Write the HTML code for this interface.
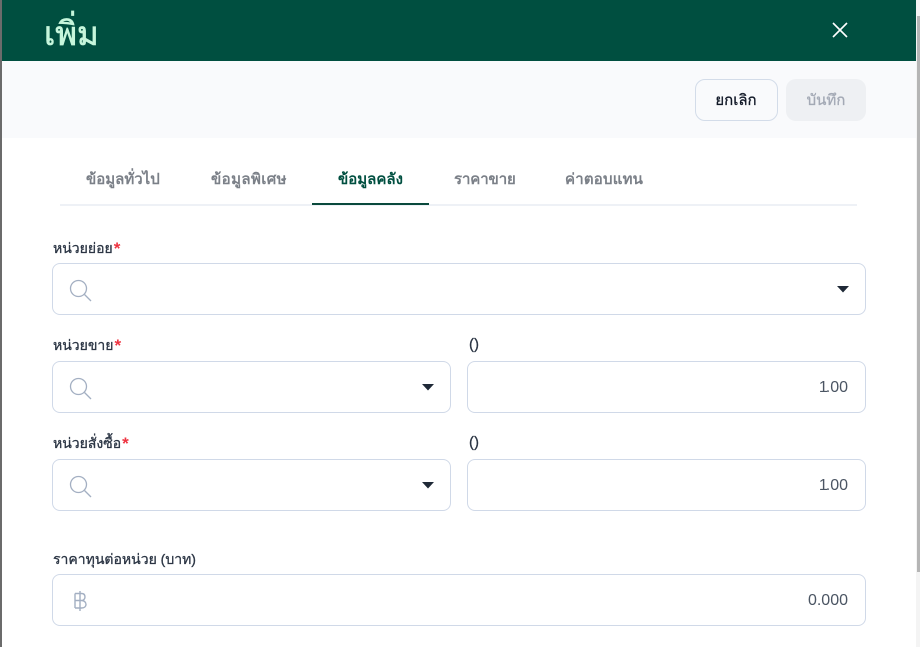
<!DOCTYPE html>
<html><head><meta charset="utf-8"><style>
html,body{margin:0;padding:0;background:#fff;width:920px;height:647px;overflow:hidden}
body{position:relative;font-family:"Liberation Sans","Noto Sans CJK SC",sans-serif}
div,span{position:absolute;box-sizing:border-box;white-space:nowrap}
svg{position:absolute}
.lbl{font-size:14px;font-weight:500;color:#2b3544;line-height:20px;-webkit-text-stroke:.3px #2b3544}
.lbl i{color:#ee3340;font-style:normal;position:static;font-size:17px;line-height:14px;font-weight:700;-webkit-text-stroke:0;margin-left:1px;vertical-align:-1px}
.tab{top:169px;font-size:15px;font-weight:700;color:#7b8088;line-height:22px}
.box{background:#fff;border:1px solid #d0d9e8;border-radius:8px;height:52px}
.val{font-size:16px;color:#4b5563;line-height:20px;text-align:right}
.val b{font-weight:400;position:static;letter-spacing:-2px}
</style></head><body>
<div style="left:0;top:0;width:916px;height:61px;background:#004f40"></div>
<div style="left:0;top:61px;width:916px;height:77px;background:#f9fafc"></div>
<div style="left:0;top:0;width:2px;height:647px;background:#6b6b6b"></div>
<div style="left:916px;top:0;width:4px;height:647px;background:#f4f4f4"></div>
<div style="left:917px;top:16px;width:3px;height:556px;background:#b5b5b5"></div>
<div style="left:44px;top:12px;font-size:33px;line-height:44px;font-weight:500;color:#c6f6dc;-webkit-text-stroke:.7px #c6f6dc">เพิ่ม</div>
<svg style="left:832px;top:22px" width="16" height="16" viewBox="0 0 16 16"><path d="M1 1L15 15M15 1L1 15" stroke="#fff" stroke-width="1.6" fill="none"/></svg>
<div style="left:694.500px;top:79px;width:83px;height:42px;border:1px solid #d3dce9;border-radius:10px;background:#f9fafc;font-size:15px;font-weight:500;color:#111827;text-align:center;line-height:41px;-webkit-text-stroke:.3px #111827">ยกเลิก</div>
<div style="left:786px;top:79px;width:80px;height:42px;border-radius:10px;background:#eef0f3;font-size:15px;font-weight:500;color:#a3a9b5;text-align:center;line-height:43px;-webkit-text-stroke:.3px #a3a9b5">บันทึก</div>

<div style="left:60px;top:204px;width:797px;height:2px;background:#eef1f6"></div>
<div style="left:312px;top:203px;width:117px;height:2px;background:#0a4a3c"></div>
<div class="tab" style="left:86px">ข้อมูลทั่วไป</div>
<div class="tab" style="left:211px;letter-spacing:.4px">ข้อมูลพิเศษ</div>
<div class="tab" style="left:338px;color:#004f40">ข้อมูลคลัง</div>
<div class="tab" style="left:454px;letter-spacing:-.1px">ราคาขาย</div>
<div class="tab" style="left:565px;letter-spacing:.2px">ค่าตอบแทน</div>

<div class="lbl" style="left:53px;top:238px">หน่วยย่อย<i>*</i></div>
<div class="box" style="left:52px;top:263px;width:814px"></div>
<svg style="left:69px;top:279px" width="23" height="23" viewBox="0 0 23 23"><circle cx="9.5" cy="9.5" r="8" fill="none" stroke="#a3afc2" stroke-width="1.3"/><path d="M15.500 15.500L22 22" stroke="#a3afc2" stroke-width="1.3" fill="none"/></svg>
<svg style="left:837px;top:286px" width="12" height="7" viewBox="0 0 12 7"><path d="M0 0H12L6 6.500Z" fill="#1f2937"/></svg>

<div class="lbl" style="left:53px;top:335px">หน่วยขาย<i>*</i></div>
<div class="box" style="left:52px;top:361px;width:399px"></div>
<svg style="left:69px;top:377px" width="23" height="23" viewBox="0 0 23 23"><circle cx="9.5" cy="9.5" r="8" fill="none" stroke="#a3afc2" stroke-width="1.3"/><path d="M15.500 15.500L22 22" stroke="#a3afc2" stroke-width="1.3" fill="none"/></svg>
<svg style="left:422px;top:384px" width="12" height="7" viewBox="0 0 12 7"><path d="M0 0H12L6 6.500Z" fill="#1f2937"/></svg>
<div class="lbl" style="left:469px;top:335px;font-size:15px">()</div>
<div class="box" style="left:467px;top:361px;width:399px"></div>
<div class="val" style="left:748px;top:378px;width:100px"><b>1</b>.00</div>

<div class="lbl" style="left:53px;top:433px">หน่วยสั่งซื้อ<i>*</i></div>
<div class="box" style="left:52px;top:459px;width:399px"></div>
<svg style="left:69px;top:475px" width="23" height="23" viewBox="0 0 23 23"><circle cx="9.5" cy="9.5" r="8" fill="none" stroke="#a3afc2" stroke-width="1.3"/><path d="M15.500 15.500L22 22" stroke="#a3afc2" stroke-width="1.3" fill="none"/></svg>
<svg style="left:422px;top:482px" width="12" height="7" viewBox="0 0 12 7"><path d="M0 0H12L6 6.500Z" fill="#1f2937"/></svg>
<div class="lbl" style="left:469px;top:433px;font-size:15px">()</div>
<div class="box" style="left:467px;top:459px;width:399px"></div>
<div class="val" style="left:748px;top:476px;width:100px"><b>1</b>.00</div>

<div class="lbl" style="left:53px;top:549px">ราคาทุนต่อหน่วย (บาท)</div>
<div class="box" style="left:52px;top:574px;width:814px"></div>
<svg style="left:72px;top:590px" width="16" height="22" viewBox="0 0 16 22"><path d="M3 3.500H9.500C12 3.500 13 5 13 7C13 9 11.500 10.500 9.500 10.500H3M9.500 10.500C12.500 10.500 14 12.500 14 14.500C14 16.500 12.500 18 9.500 18H3M3 3.500V18M8 1V21" fill="none" stroke="#a3afc2" stroke-width="1.4"/></svg>
<div class="val" style="left:748px;top:591px;width:100px">0.000</div>
</body></html>
